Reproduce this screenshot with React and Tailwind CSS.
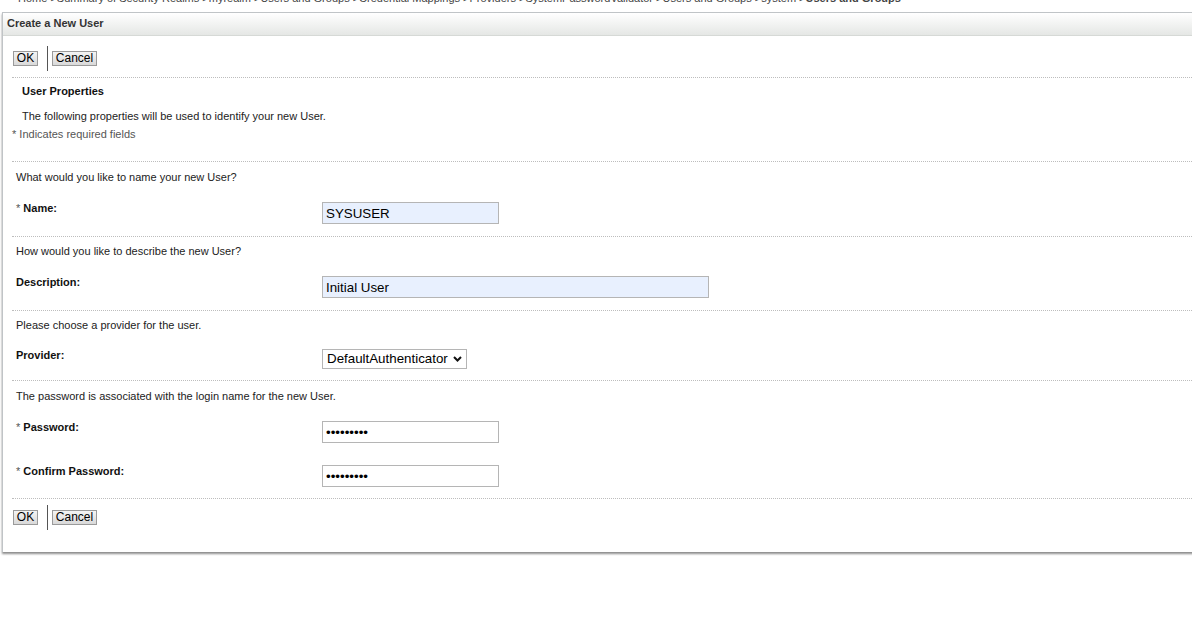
// App.jsx — Create a New User form
const font = { fontFamily: '"Liberation Sans", Arial, sans-serif' };

function Buttons() {
  return (
    <div className="flex items-center pl-[1px]">
      <button className="h-[15px] w-[25px] border border-[#9a9a9a] bg-gradient-to-b from-[#f4f4f4] to-[#d9d9d9] text-[12px] leading-[13px] text-black">
        OK
      </button>
      <div className="ml-[9px] mr-[4px] h-[25px] w-px bg-[#555]" />
      <button className="h-[15px] w-[45px] border border-[#9a9a9a] bg-gradient-to-b from-[#f4f4f4] to-[#d9d9d9] text-[12px] leading-[13px] text-black">
        Cancel
      </button>
    </div>
  );
}

function Question({ children, pt, pb }) {
  return (
    <div className={`pl-[4px] text-[11px] leading-[12px] text-[#222] ${pt} ${pb}`}>{children}</div>
  );
}

function Label({ req, children }) {
  return (
    <div className="pl-[4px] text-[11px] font-bold leading-[12px] text-[#111]">
      {req && <span className="font-normal text-[#555]">* </span>}
      {children}
    </div>
  );
}

function TextField({ value, width, blue, type = "text" }) {
  return (
    <input
      readOnly
      type={type}
      value={value}
      className={`block h-[22px] ${width} border border-[#b5b5b5] px-[3px] text-[13.33px] text-black outline-none ${
        blue ? "bg-[#e8f0fe]" : "bg-white"
      }`}
      style={font}
    />
  );
}

export default function App() {
  return (
    <div className="h-[617px] w-full overflow-hidden bg-white" style={font}>
      {/* breadcrumb, cut off by the top of the window */}
      <div className="flex h-[12px] flex-col pl-[18px]">
        <div className="mt-[-7px] whitespace-nowrap text-[11px] leading-[11px] text-[#444]">
          Home &gt;Summary of Security Realms &gt;myrealm &gt;Users and Groups &gt;Credential Mappings
          &gt;Providers &gt;SystemPasswordValidator &gt;Users and Groups &gt;system &gt;
          <span className="font-bold">Users and Groups</span>
        </div>
      </div>

      <div className="ml-[2px] w-[1210px] border-l border-t border-[#c0c4c7] shadow-[0_2px_2px_rgba(0,0,0,0.45)]">
        {/* header */}
        <div className="h-[23px] border-b border-[#d6d9d6] bg-gradient-to-b from-white to-[#e5e7e5] pl-[4px] text-[11px] font-bold leading-[21px] text-[#333]">
          Create a New User
        </div>

        <div className="ml-[9px]">
          <div className="pt-[10px] pb-[6px]">
            <Buttons />
          </div>

          {/* user properties */}
          <div className="border-t border-dotted border-[#bdbdbd] pt-[7px] pb-[21px] text-[11px] leading-[12px]">
            <div className="pl-[10px] font-bold text-[#111]">User Properties</div>
            <div className="mt-[13px] pl-[10px] text-[#222]">
              The following properties will be used to identify your new User.
            </div>
            <div className="mt-[6px] text-[#555]">* Indicates required fields</div>
          </div>

          {/* name */}
          <div className="border-t border-dotted border-[#bdbdbd] pb-[12px]">
            <Question pt="pt-[9px]" pb="pb-[19px]">What would you like to name your new User?</Question>
            <div className="grid grid-cols-[306px_1fr]">
              <Label req>Name:</Label>
              <div className="pl-[4px]">
                <TextField value="SYSUSER" width="w-[177px]" blue />
              </div>
            </div>
          </div>

          {/* description */}
          <div className="border-t border-dotted border-[#bdbdbd] pb-[12px]">
            <Question pt="pt-[8px]" pb="pb-[19px]">How would you like to describe the new User?</Question>
            <div className="grid grid-cols-[306px_1fr]">
              <Label>Description:</Label>
              <div className="pl-[4px]">
                <TextField value="Initial User" width="w-[387px]" blue />
              </div>
            </div>
          </div>

          {/* provider */}
          <div className="border-t border-dotted border-[#bdbdbd] pb-[11px]">
            <Question pt="pt-[8px]" pb="pb-[18px]">Please choose a provider for the user.</Question>
            <div className="grid grid-cols-[306px_1fr]">
              <Label>Provider:</Label>
              <div className="pl-[4px]">
                <div className="relative h-[20px] w-[145px]">
                  <select
                    className="block h-[20px] w-[145px] appearance-none border border-[#b5b5b5] bg-white pl-[4px] text-[13.33px] leading-[18px] text-black outline-none"
                    style={font}
                    defaultValue="DefaultAuthenticator"
                  >
                    <option>DefaultAuthenticator</option>
                  </select>
                  <svg
                    className="pointer-events-none absolute right-[5px] top-[7px]"
                    width="9"
                    height="6"
                    viewBox="0 0 9 6"
                  >
                    <path d="M1 1 L4.5 4.5 L8 1" fill="none" stroke="#111" strokeWidth="2" />
                  </svg>
                </div>
              </div>
            </div>
          </div>

          {/* password */}
          <div className="border-t border-dotted border-[#bdbdbd] pb-[11px]">
            <Question pt="pt-[9px]" pb="pb-[19px]">The password is associated with the login name for the new User.</Question>
            <div className="grid grid-cols-[306px_1fr]">
              <Label req>Password:</Label>
              <div className="pl-[4px]">
                <TextField type="password" value="password1" width="w-[177px]" />
              </div>
            </div>
            <div className="mt-[22px] grid grid-cols-[306px_1fr]">
              <Label req>Confirm Password:</Label>
              <div className="pl-[4px]">
                <TextField type="password" value="password1" width="w-[177px]" />
              </div>
            </div>
          </div>

          <div className="border-t border-dotted border-[#bdbdbd] pt-[6px] pb-[22px]">
            <Buttons />
          </div>
        </div>
      </div>
    </div>
  );
}
